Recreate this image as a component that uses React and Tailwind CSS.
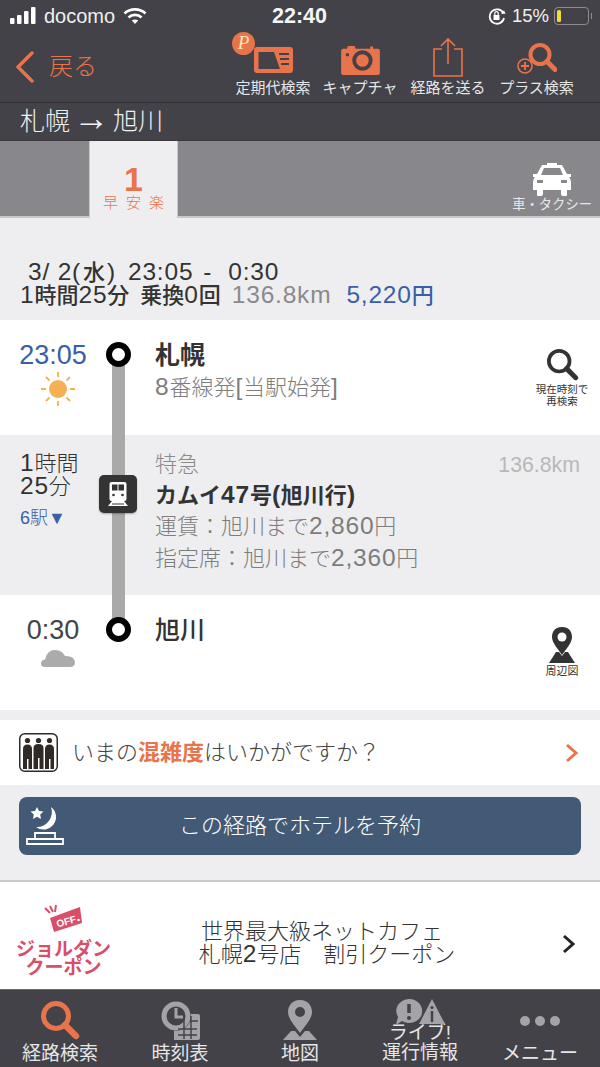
const JP = { fontFamily: '"Liberation Sans", "Noto Sans CJK JP", sans-serif' };

function L({ children, className = '' }) {
  return <span className={'text-[24.5px] tracking-[0.8px] leading-[20px] ' + className}>{children}</span>;
}

function Search({ size = 40, color = '#e9734a', sw = 5 }) {
  return (
    <svg width={size} height={size} viewBox="0 0 40 40" fill="none">
      <circle cx="16" cy="16" r="12.5" stroke={color} strokeWidth={sw} />
      <path d="M25 25 L36 36" stroke={color} strokeWidth={sw + 1.5} strokeLinecap="round" />
    </svg>
  );
}

function ToolBtn({ label, children, w }) {
  return (
    <div className="flex flex-col items-center" style={{ width: w }}>
      <div className="h-[48px] w-full flex items-end justify-center relative">{children}</div>
      <div className="text-[15px] leading-[18px] text-[#e6e6e6] whitespace-nowrap mt-[2px]">{label}</div>
    </div>
  );
}

function TabIcon({ label, children }) {
  return (
    <div className="flex-1 flex flex-col items-center justify-end h-full relative">
      <div className="absolute top-[10px] left-0 right-0 flex justify-center">{children}</div>
      <div className="text-[19px] leading-[20px] text-[#e6e6e6] text-center whitespace-nowrap pb-[3px]">{label}</div>
    </div>
  );
}

export default function App() {
  return (
    <div className="w-[600px] h-[1067px] overflow-hidden bg-[#eeeef0] flex flex-col relative" style={JP}>
      {/* dark header */}
      <div className="bg-[#424248] shrink-0">
        <div className="h-[32px] flex items-center justify-between px-[10px] relative">
          <div className="flex items-center">
            <svg width="28" height="18" viewBox="0 0 28 18" fill="#fff">
              <rect x="0" y="11" width="4.5" height="6" rx="1" />
              <rect x="7" y="8" width="4.5" height="9" rx="1" />
              <rect x="14" y="4" width="4.5" height="13" rx="1" />
              <rect x="21" y="0" width="4.5" height="17" rx="1" />
            </svg>
            <span className="text-[20px] text-[#f0f0f0] ml-[6px] leading-none">docomo</span>
            <svg className="ml-[8px]" width="24" height="18" viewBox="0 0 24 18" fill="none" stroke="#fff" strokeWidth="2.6">
              <path d="M1.5 6.5 C7 1 17 1 22.5 6.5" />
              <path d="M5.5 10.5 C9 7 15 7 18.5 10.5" />
              <path d="M12 17 L8.8 13.6 C10.5 12.2 13.5 12.2 15.2 13.6 Z" fill="#fff" stroke="none" />
            </svg>
          </div>
          <div className="absolute left-[272px] top-[3px] text-[21.5px] leading-[26px] font-bold text-[#f5f5f5]">22:40</div>
          <div className="flex items-center">
            <svg width="18" height="18" viewBox="0 0 18 18" fill="none" stroke="#fff" strokeWidth="1.8">
              <path d="M15.5 6.5 A7.2 7.2 0 1 0 16 11" />
              <path d="M13 6.8 L17.5 6.8 L16 3.2 Z" fill="#fff" stroke="none" />
              <rect x="5.5" y="8" width="6" height="5" fill="#fff" stroke="none" />
              <path d="M6.8 8 V6.3 a1.7 1.7 0 0 1 3.4 0 V8" strokeWidth="1.2" />
            </svg>
            <span className="text-[18.5px] text-[#f0f0f0] ml-[6px] leading-none">15%</span>
            <div className="ml-[5px] w-[35px] h-[18px] rounded-[4px] border border-[#8c8c8c] p-[2px] flex">
              <div className="w-[4px] rounded-[1.5px] bg-[#f7d93c]" />
            </div>
            <div className="w-[1.5px] h-[6px] bg-[#8c8c8c] ml-[1.5px] mr-[-2px]" />
          </div>
        </div>
        <div className="h-[71px] flex items-start border-b border-[#303034]">
          <div className="w-[228px] h-[70px] flex items-center pl-[15px] pb-[1px]">
            <svg width="20" height="32" viewBox="0 0 20 32" fill="none" stroke="#e9734a" strokeWidth="3.4" strokeLinecap="round" strokeLinejoin="round">
              <path d="M17 2 L3 16 L17 30" />
            </svg>
            <span className="text-[24px] leading-none text-[#e9734a] ml-[14px] font-light">戻る</span>
          </div>
          <div className="flex -mt-[3px] ml-[2px]">
            <ToolBtn label="定期代検索" w={86}>
              <svg className="mb-[4px]" width="39" height="26" viewBox="0 0 39 26">
                <rect width="39" height="26" rx="3" fill="#e9734a" />
                <path d="M4.5 5 H20 L26 22 H4.5 Z" fill="#424248" />
                <path d="M25 7 H35 M26 12 H35 M27 17 H35" stroke="#424248" strokeWidth="2" />
              </svg>
              <div className="absolute left-[2px] top-[3px] w-[23px] h-[23px] rounded-full bg-[#e9734a] text-[#fbe9b8] text-[19px] leading-[22px] text-center italic" style={{ fontFamily: '"Liberation Serif", serif' }}>P</div>
            </ToolBtn>
            <ToolBtn label="キャプチャ" w={88}>
              <svg className="mb-[2px]" width="39" height="30" viewBox="0 0 40 31">
                <path d="M2 4 H6 L7 1 H14 L15 4 H30 V1.5 H33 V4 H38 a2 2 0 0 1 2 2 V29 a2 2 0 0 1 -2 2 H2 a2 2 0 0 1 -2 -2 V6 a2 2 0 0 1 2 -2Z" fill="#e9734a" />
                <circle cx="22" cy="16" r="8.5" fill="#e9734a" stroke="#424248" strokeWidth="4" />
                <circle cx="6.5" cy="10" r="1.8" fill="#424248" />
              </svg>
            </ToolBtn>
            <ToolBtn label="経路を送る" w={88}>
              <svg width="30" height="40" viewBox="0 0 30 40" fill="none" stroke="#e9734a" strokeWidth="1.6">
                <path d="M9 12 H1 V39 H29 V12 H21" />
                <path d="M15 27 V2 M8 9 L15 2 L22 9" />
              </svg>
            </ToolBtn>
            <ToolBtn label="プラス検索" w={89}>
              <svg className="mb-[2px]" width="40" height="32" viewBox="0 0 40 32" fill="none">
                <circle cx="23" cy="11.5" r="9.5" stroke="#e9734a" strokeWidth="4" />
                <path d="M30 18.5 L38 26.5" stroke="#e9734a" strokeWidth="5" strokeLinecap="round" />
                <circle cx="8" cy="23" r="7" fill="#424248" stroke="#e9734a" strokeWidth="1.6" />
                <path d="M4 23 H12 M8 19 V27" stroke="#e9734a" strokeWidth="1.8" />
              </svg>
            </ToolBtn>
          </div>
        </div>
        <div className="h-[38px] flex items-center pl-[20px] text-[25px] text-[#f0f0f0] font-light leading-none whitespace-nowrap border-b border-[#38383c]">
          <span>札幌</span>
          <span className="w-[43px] text-center text-[36px] leading-none -mt-[7px]">→</span>
          <span>旭川</span>
        </div>
      </div>

      {/* tabs */}
      <div className="h-[77px] bg-[#87878c] shrink-0 flex relative border-b-2 border-[#c9c9cd]">
        <div className="ml-[89px] w-[89px] h-[77px] bg-[#eeeef0] border-x border-[#c8c8cc] flex flex-col items-center z-10">
          <div className="text-[34px] leading-[34px] mt-[21px] font-bold text-[#e9734a]">1</div>
          <div className="text-[15px] leading-[16px] -mt-[1px] tracking-[8px] pl-[8px] text-[#e9734a] font-light whitespace-nowrap">早安楽</div>
        </div>
        <div className="absolute right-[8px] top-[20px] flex flex-col items-center">
          <svg width="38" height="35" viewBox="0 0 38 35" fill="#fff">
            <path d="M14 2 H24 V4 H29 L34 13 H37 a1 1 0 0 1 0 3 H36 Q38 18 38 21 V29 H34 V34 Q34 35 33 35 H30 Q28 35 28 33 V29 H10 V33 Q10 35 8 35 H5 Q4 35 4 34 V29 H0 V21 Q0 18 2 16 H1 a1 1 0 0 1 0 -3 H4 L9 4 H14Z" />
            <path d="M11 7 H27 L30 14 H8Z" fill="#87878c" />
            <rect x="4" y="19" width="6" height="3" fill="#87878c" />
            <rect x="28" y="19" width="6" height="3" fill="#87878c" />
          </svg>
          <div className="text-[13.3px] leading-[16px] mt-[1px] text-[#e8e8e8] whitespace-nowrap">車・タクシー</div>
        </div>
      </div>

      {/* summary */}
      <div className="h-[102px] shrink-0 pt-[44px] pl-[20px]">
        <div className="h-[22px] text-[22px] leading-[22px] font-medium text-[#333] pl-[8px] whitespace-nowrap">
          <L>3/ 2(</L><span className="mx-[2px]">水</span><L>)</L><L className="ml-[12px]">23:05</L><L className="ml-[10px]">-</L><L className="ml-[16px]">0:30</L>
        </div>
        <div className="h-[24px] text-[22px] leading-[24px] font-medium text-[#333] whitespace-nowrap">
          <L>1</L>時間<L>25</L>分<span className="ml-[11px]">乗換<L>0</L>回</span><L className="ml-[11px] text-[#8a8a8a]">136.8km</L><span className="ml-[15px] text-[#3a5ea8]"><L>5,220</L>円</span>
        </div>
      </div>

      {/* route */}
      <div className="relative shrink-0">
        <div className="absolute left-[112px] top-[35px] w-[13px] h-[275px] bg-[#a9a9a9] z-[5]" />
        <div className="h-[115px] bg-white flex relative">
          <div className="w-[106px] flex flex-col items-center pt-[21px]">
            <div className="text-[27px] leading-[28px] text-[#3a5ea8] whitespace-nowrap">23:05</div>
            <svg className="mt-[2px] ml-[9px]" width="36" height="36" viewBox="0 0 36 36">
              <circle cx="18" cy="18" r="9" fill="#f5b053" />
              <path d="M18 1 V6 M18 30 V35 M1 18 H6 M30 18 H35 M6 6 L9.500 9.500 M26.500 26.500 L30 30 M6 30 L9.500 26.500 M26.500 9.500 L30 6" stroke="#f5b053" strokeWidth="1.8" />
            </svg>
          </div>
          <div className="w-[25px] h-[25px] mt-[22px] rounded-full border-[6.5px] border-black bg-white z-10 shrink-0" />
          <div className="ml-[24px] pt-[19px]">
            <div className="text-[25px] leading-[32px] font-bold text-[#333] whitespace-nowrap">札幌</div>
            <div className="text-[22px] leading-[26px] text-[#7d7d7d] mt-[4px] font-light whitespace-nowrap"><L>8</L>番線発<L>[</L>当駅始発<L>]</L></div>
          </div>
          <div className="absolute right-[0px] top-[28px] w-[76px] flex flex-col items-center">
            <Search size={33} color="#333" sw={4.5} />
            <div className="text-[10.500px] leading-[12px] text-[#333] text-center mt-[2px] whitespace-nowrap">現在時刻で<br />再検索</div>
          </div>
        </div>
        <div className="h-[160px] bg-[#eeeef0] flex relative">
          <div className="w-[99px] pl-[20px] pt-[17px] text-[#333]">
            <div className="text-[22px] leading-[23px] font-light whitespace-nowrap"><L>1</L>時間</div>
            <div className="text-[22px] leading-[23px] font-light whitespace-nowrap"><L>25</L>分</div>
            <div className="text-[18px] leading-[22px] mt-[9px] text-[#3a5ea8] font-light whitespace-nowrap">6駅▼</div>
          </div>
          <div className="w-[38px] h-[38px] mt-[40px] rounded-[5px] bg-[#333] shadow-[0_1px_2px_rgba(0,0,0,0.3)] flex items-center justify-center z-10">
            <svg width="24" height="26" viewBox="0 0 24 26">
              <rect x="3.500" y="1" width="17" height="19" rx="2" fill="#fff" />
              <rect x="6" y="3.500" width="5.500" height="6" fill="#333" />
              <rect x="12.500" y="3.500" width="5.500" height="6" fill="#333" />
              <circle cx="7.500" cy="14" r="1.300" fill="#333" />
              <circle cx="16.500" cy="14" r="1.300" fill="#333" />
              <path d="M6 20 L2 25 H22 L18 20 Z" fill="#fff" />
              <path d="M6 23 H18" stroke="#333" strokeWidth="1" />
            </svg>
          </div>
          <div className="ml-[18px] pt-[16px] flex-1">
            <div className="text-[22px] leading-[27px] text-[#8a8a8a] font-light">特急</div>
            <div className="text-[22px] leading-[28px] font-bold text-[#333] mt-[4px] whitespace-nowrap">カムイ<L>47</L>号<L>(</L>旭川行<L>)</L></div>
            <div className="text-[22px] leading-[30px] text-[#7d7d7d] font-light mt-[2px] whitespace-nowrap">運賃：旭川まで<L>2,860</L>円</div>
            <div className="text-[22px] leading-[30px] text-[#7d7d7d] font-light mt-[2px] whitespace-nowrap">指定席：旭川まで<L>2,360</L>円</div>
          </div>
          <div className="absolute right-[20px] top-[17px] text-[21.3px] leading-[26px] text-[#b8b8b8]">136.8km</div>
        </div>
        <div className="h-[115px] bg-white flex relative">
          <div className="w-[106px] flex flex-col items-center pt-[21px]">
            <div className="text-[27px] leading-[28px] text-[#444]">0:30</div>
            <svg className="mt-[1px] ml-[9px]" width="36" height="24" viewBox="0 0 36 24">
              <path d="M5 22 Q1 22 1 18.500 Q1 15 5 14.500 Q7 5 15 5 Q22 5 25 11 Q34 10.500 35 17 Q35 22 30 22 Z" fill="#ababab" />
            </svg>
          </div>
          <div className="w-[25px] h-[25px] mt-[22px] rounded-full border-[6.5px] border-black bg-white z-10 shrink-0" />
          <div className="ml-[24px] pt-[19px]">
            <div className="text-[25px] leading-[32px] font-medium text-[#333]">旭川</div>
          </div>
          <div className="absolute right-[0px] top-[32px] w-[76px] flex flex-col items-center">
            <svg width="28" height="36" viewBox="0 0 28 36">
              <path d="M14 0 C6 0 4 6 4 10 C4 16 10 22 14 28 C18 22 24 16 24 10 C24 6 22 0 14 0Z" fill="#333" />
              <circle cx="14" cy="10" r="4.500" fill="#fff" />
              <path d="M8 25 H11 L14 29 L17 25 H20 L27 36 H1 Z" fill="#333" />
            </svg>
            <div className="text-[11px] leading-[14px] text-[#333] mt-[1px]">周辺図</div>
          </div>
        </div>
      </div>

      {/* congestion */}
      <div className="h-[65px] mt-[10px] bg-white shrink-0 flex items-center pl-[19px] pr-[21px]">
        <svg width="39" height="39" viewBox="0 0 39 39">
          <rect x="0.750" y="0.750" width="37.500" height="37.500" rx="5" fill="#fff" stroke="#2f2a26" strokeWidth="1.500" />
          <g fill="#2f2a26">
            <circle cx="8.500" cy="7.500" r="2.600" /><circle cx="19.500" cy="7.500" r="2.600" /><circle cx="30.500" cy="7.500" r="2.600" />
            <path d="M4 36 V16 Q4 11.500 8.500 11.500 Q13 11.500 13 16 V36 H9.500 V26 H8 V36 Z" />
            <path d="M14.500 36 V15 Q14.500 11 19.500 11 Q24.500 11 24.500 15 V36 H20.500 V25 H19 V36 Z" />
            <path d="M26 36 V16 Q26 11.500 30.500 11.500 Q35 11.500 35 16 V36 H31.500 V26 H30 V36 Z" />
          </g>
        </svg>
        <div className="ml-[14px] text-[22px] leading-none text-[#444] font-light whitespace-nowrap">いまの<span className="font-bold text-[#e9734a]">混雑度</span>はいかがですか？</div>
        <svg className="ml-auto" width="14" height="20" viewBox="0 0 14 20" fill="none" stroke="#e9734a" strokeWidth="3">
          <path d="M2 2 L11 10 L2 18" />
        </svg>
      </div>

      {/* hotel */}
      <div className="h-[95px] shrink-0 px-[19px] pt-[12px]">
        <div className="h-[58px] rounded-[8px] bg-[#425a76] flex items-center relative">
          <svg className="absolute left-0 top-0" width="50" height="58" viewBox="0 0 50 58">
            <path d="M32 10 A12 12 0 1 1 17 30 A15 15 0 0 0 32 10Z" fill="#fff" />
            <path d="M18 10 l2 4 4.500 .6 -3.300 3 .8 4.400 -4 -2.200 -4 2.200 .8 -4.400 -3.300 -3 4.500 -.6Z" fill="#fff" />
            <path d="M16 36 H36 V42 H16Z M8 42 H44 V47 H8Z" fill="none" stroke="#fff" strokeWidth="1.800" />
          </svg>
          <div className="w-full text-center text-[22px] leading-none text-white font-light whitespace-nowrap">この経路でホテルを予約</div>
        </div>
      </div>

      {/* banner */}
      <div className="h-[109px] shrink-0 bg-white border-t-2 border-[#c9c9cf] relative flex">
        <div className="w-[127px] flex flex-col items-center pt-[22px]">
          <svg width="40" height="30" viewBox="44 904 40 30">
            <path d="M50 918 L73 909.500 L80 907 L82 923 L54 932 Z" fill="#d94e68" />
            <circle cx="78.500" cy="920" r="1.300" fill="#fff" />
            <path d="M45 908 L50 913 M50 906 L53 912 M56 905 L55 912" stroke="#d94e68" strokeWidth="2" />
            <text x="66" y="925" textAnchor="middle" fontSize="10" fontWeight="700" fill="#fff" transform="rotate(-15 66 921)">OFF</text>
          </svg>
          <div className="text-[19px] leading-[18px] font-bold text-[#d94e68] whitespace-nowrap mt-[7px]">ジョルダン</div>
          <div className="text-[19px] leading-[18px] font-bold text-[#d94e68] whitespace-nowrap">クーポン</div>
        </div>
        <div className="w-[400px] pt-[38px] text-center text-[22px] leading-[23px] text-[#333] font-light">
          <div className="whitespace-nowrap pr-[10px]">世界最大級ネットカフェ</div>
          <div className="whitespace-nowrap">札幌<L>2</L>号店　割引クーポン</div>
        </div>
        <svg className="absolute left-[562px] top-[52px]" width="14" height="20" viewBox="0 0 14 20" fill="none" stroke="#222" strokeWidth="3">
          <path d="M2 2 L11 10 L2 18" />
        </svg>
      </div>

      {/* tab bar */}
      <div className="flex-1 bg-[#424248] flex border-t border-[#6a6a6e]">
        <TabIcon label="経路検索"><Search size={40} color="#e9734a" sw={5} /></TabIcon>
        <TabIcon label="時刻表">
          <svg width="40" height="40" viewBox="0 0 40 40">
            <path d="M14 14 H38 a2 2 0 0 1 2 2 V38 a2 2 0 0 1 -2 2 H14Z" fill="#a4a4a8" />
            <circle cx="16" cy="16" r="15" fill="#424248" />
            <circle cx="16" cy="16" r="12" fill="#424248" stroke="#a4a4a8" strokeWidth="5" />
            <path d="M16 8 V17 H23" fill="none" stroke="#a4a4a8" strokeWidth="3" />
            <path d="M18 29 H37 M18 35 H37 M24 16 V39 M31 16 V39 M30 21 H38" stroke="#424248" strokeWidth="1.500" />
          </svg>
        </TabIcon>
        <TabIcon label="地図">
          <svg width="34" height="40" viewBox="0 0 34 40">
            <path d="M17 0 C8 0 5 7 5 12 C5 19 12 26 17 33 C22 26 29 19 29 12 C29 7 26 0 17 0Z" fill="#a4a4a8" />
            <circle cx="17" cy="12" r="5" fill="#424248" />
            <path d="M8 31 H12 L17 37 L22 31 H26 L34 40 H0 Z" fill="#a4a4a8" />
          </svg>
        </TabIcon>
        <div className="flex-1 flex flex-col items-center justify-end h-full relative">
          <svg className="absolute top-[9px] left-[35px]" width="50" height="26" viewBox="0 0 50 26">
            <path d="M14 0 a13 12 0 1 1 -7 22 L1 26 L3 18 A13 12 0 0 1 14 0Z" fill="#a4a4a8" />
            <path d="M14 5 V14" stroke="#424248" strokeWidth="3.500" />
            <circle cx="14" cy="19" r="2" fill="#424248" />
            <path d="M37 0 L50 25 H24Z" fill="#a4a4a8" />
            <path d="M37 12 V23" stroke="#424248" strokeWidth="2.500" />
            <circle cx="37" cy="8.500" r="1.600" fill="#424248" />
          </svg>
          <div className="text-[19px] leading-[20px] text-[#e6e6e6] text-center whitespace-nowrap pb-[4px]">ライブ!<br />運行情報</div>
        </div>
        <TabIcon label="メニュー">
          <div className="flex gap-[5px] mt-[16px]">
            <div className="w-[10px] h-[10px] rounded-full bg-[#a4a4a8]" />
            <div className="w-[10px] h-[10px] rounded-full bg-[#a4a4a8]" />
            <div className="w-[10px] h-[10px] rounded-full bg-[#a4a4a8]" />
          </div>
        </TabIcon>
      </div>
    </div>
  );
}
